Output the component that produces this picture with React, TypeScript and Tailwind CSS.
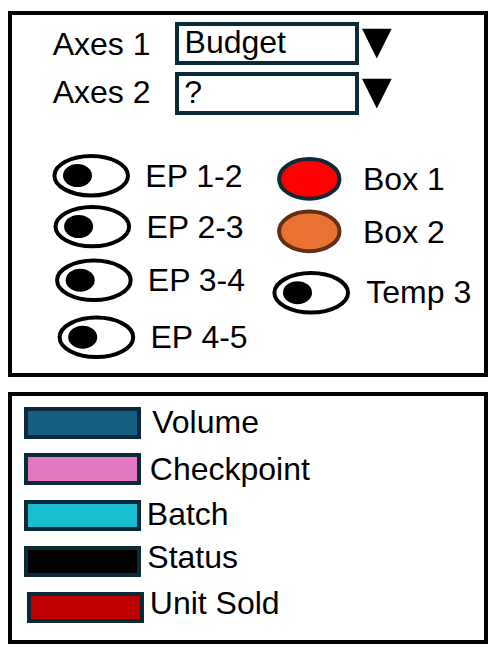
import React from "react";

const NAVY = "#0b2a38";

function Panel({ className, children }: { className: string; children: React.ReactNode }) {
  return <section className={`w-[480px] shrink-0 border-4 border-black ${className}`}>{children}</section>;
}

function AxisRow({ label, value, labelClass, valueClass }: { label: string; value: string; labelClass: string; valueClass: string }) {
  return (
    <div className="flex h-[50px] items-start pl-[40.7px]">
      <span className={`w-[122.3px] ${labelClass}`}>{label}</span>
      <div className="h-[43px] w-[184px] border-4 border-[#0b2a38]">
        <span className={`block ${valueClass}`}>{value}</span>
      </div>
      <svg className="ml-[3px] mt-[6px]" width="30" height="32" viewBox="0 0 30 32">
        <path d="M0 0.7H29.7L14.8 30.5Z" fill="black" />
      </svg>
    </div>
  );
}

function Toggle({ cx = 39.2, cy }: { cx?: number; cy: number }) {
  return (
    <svg className="shrink-0" width="80" height="46" viewBox="0 0 80 46">
      <ellipse cx={cx} cy={cy} rx="36.8" ry="19.7" fill="white" stroke="black" strokeWidth="4" />
      <ellipse cx={cx - 13.7} cy={cy - 0.1} rx="14.5" ry="11.5" fill="black" />
    </svg>
  );
}

function Lamp({ fill, stroke, cy }: { fill: string; stroke: string; cy: number }) {
  return (
    <svg className="shrink-0" width="66" height="46" viewBox="0 0 66 46">
      <ellipse cx="32.3" cy={cy} rx="30.2" ry="19.8" fill={fill} stroke={stroke} strokeWidth="4" />
    </svg>
  );
}

function LegendRow({ row, swatch, text, label }: { row: string; swatch: string; text: string; label: string }) {
  return (
    <div className={`flex items-start ${row}`}>
      <div className={`w-[117px] shrink-0 border-4 border-[#0b2a38] ${swatch}`} />
      <span className={text}>{label}</span>
    </div>
  );
}

export default function App() {
  return (
    <main className="flex h-[660px] w-[496px] flex-col overflow-hidden bg-white pl-2 pt-[11px] font-['Liberation_Sans',Arial,sans-serif] text-[32px] leading-8 whitespace-nowrap text-black">
      <Panel className="h-[366px] pt-[7px]">
        <AxisRow label="Axes 1" value="Budget" labelClass="mt-[6px]" valueClass="pl-[5.6px]" />
        <AxisRow label="Axes 2" value="?" labelClass="mt-1" valueClass="pl-[5.3px]" />

        <div className="mt-[31px] flex items-start">
          <div className="flex w-[260px] flex-col">
            <div className="flex h-[51px] items-start pl-10">
              <Toggle cy={22.7} />
              <span className="ml-[13.3px] mt-[7px]">EP 1-2</span>
            </div>
            <div className="flex h-[54px] items-start pl-[41px]">
              <Toggle cx={39.3} cy={22.6} />
              <span className="ml-[13.4px] mt-[7px]">EP 2-3</span>
            </div>
            <div className="flex h-[57px] items-start pl-[43px]">
              <Toggle cx={38.9} cy={22.3} />
              <span className="ml-[12.8px] mt-[6px]">EP 3-4</span>
            </div>
            <div className="flex items-start pl-[45px]">
              <Toggle cx={39.4} cy={22.3} />
              <span className="ml-[13.4px] mt-[6px]">EP 4-5</span>
            </div>
          </div>

          <div className="flex flex-col pt-[3px]">
            <div className="flex h-[53px] items-start pl-[5px]">
              <Lamp fill="#ff0000" stroke={NAVY} cy={22.9} />
              <span className="ml-[20px] mt-[7px]">Box 1</span>
            </div>
            <div className="flex h-[62px] items-start pl-[5px]">
              <Lamp fill="#e97132" stroke="#622e15" cy={22.4} />
              <span className="ml-[20px] mt-[7px]">Box 2</span>
            </div>
            <div className="flex items-start">
              <Toggle cy={21.8} />
              <span className="ml-[14.3px] mt-[5px]">Temp 3</span>
            </div>
          </div>
        </div>
      </Panel>

      <Panel className="mt-[15px] h-[252px] pl-3 pt-[11px]">
        <LegendRow row="h-[46px]" swatch="h-8 bg-[#156082]" text="-mt-px ml-[11.2px]" label="Volume" />
        <LegendRow row="h-[47px]" swatch="h-8 bg-[#e377c2]" text="ml-[8.8px]" label="Checkpoint" />
        <LegendRow row="h-[46px]" swatch="h-[31px] bg-[#17becf]" text="-mt-[2px] ml-[5.8px]" label="Batch" />
        <LegendRow row="h-[46px]" swatch="h-[31px] bg-black" text="-mt-[5px] ml-[6.3px]" label="Status" />
        <LegendRow row="ml-[3px]" swatch="h-[31px] bg-[#c00000]" text="-mt-[5px] ml-[5.8px]" label="Unit Sold" />
      </Panel>
    </main>
  );
}
